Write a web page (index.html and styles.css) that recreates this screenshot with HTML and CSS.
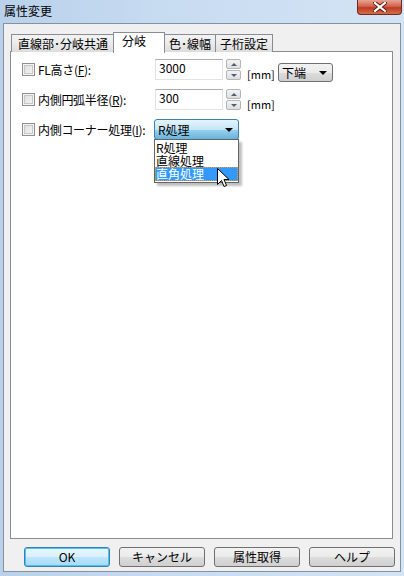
FILE: index.html
```html
<!DOCTYPE html>
<html lang="ja">
<head>
    <meta charset="UTF-8">
    <title>属性変更</title>
    <link rel="stylesheet" href="styles.css">
</head>
<body>
    <div class="window">
        <div class="titlebar">
            <span class="title">属性変更</span>
            <div class="close">
                <svg width="14" height="10" viewBox="0 0 14 10">
                    <path d="M2 1 L12 9 M12 1 L2 9" stroke="#5a1a12" stroke-width="4" stroke-linecap="square"/>
                    <path d="M2 1 L12 9 M12 1 L2 9" stroke="#ffffff" stroke-width="2.2" stroke-linecap="square"/>
                </svg>
            </div>
        </div>

        <div class="client">
            <div class="tabs">
                <div class="tab">直線部･分岐共通</div>
                <div class="tab active">分岐</div>
                <div class="tab">色･線幅</div>
                <div class="tab">子桁設定</div>
            </div>

            <div class="panel">
                <div class="row">
                    <span class="check"></span>
                    <span class="label">FL高さ(<u>F</u>):</span>
                    <span class="input">3000</span>
                    <span class="spin"><span class="up"></span><span class="down"></span></span>
                    <span class="unit">[mm]</span>
                    <span class="select">下端 <i class="arrow"></i></span>
                </div>
                <div class="row">
                    <span class="check"></span>
                    <span class="label">内側円弧半径(<u>R</u>):</span>
                    <span class="input">300</span>
                    <span class="spin"><span class="up"></span><span class="down"></span></span>
                    <span class="unit">[mm]</span>
                </div>
                <div class="row">
                    <span class="check"></span>
                    <span class="label">内側コーナー処理(<u>I</u>):</span>
                    <div class="combo-wrap">
                        <span class="combo">R処理 <i class="arrow"></i></span>
                        <ul class="droplist">
                            <li>R処理</li>
                            <li>直線処理</li>
                            <li class="hot">直角処理</li>
                        </ul>
                        <svg class="cursor" width="13" height="21" viewBox="0 0 13 21">
                            <path d="M0.5 0.5 L0.5 16.5 L4.5 12.5 L7 18.5 L9.5 17.5 L7 11.5 L12 11.5 Z" fill="#ffffff" stroke="#000000" stroke-width="1"/>
                        </svg>
                    </div>
                </div>
            </div>

            <div class="buttons">
                <button class="default">OK</button>
                <button>キャンセル</button>
                <button>属性取得</button>
                <button>ヘルプ</button>
            </div>
        </div>
    </div>
</body>
</html>
```

FILE: styles.css
```css
body {
    margin: 0;
    font-family: "Noto Sans CJK JP", "Liberation Sans", sans-serif;
    font-size: 12px;
    color: #000;
}
.window {
    width: 404px;
    height: 576px;
    background: linear-gradient(to right, #b9d1ea, #c7dbf1 40%, #d4e4f4);
    display: flex;
    flex-direction: column;
}
.titlebar {
    height: 23px;
    display: flex;
    align-items: center;
    padding-left: 4px;
    position: relative;
}
.title {
    margin-top: -3px;
}
.close {
    position: absolute;
    top: 0;
    right: 2px;
    width: 45px;
    height: 15px;
    border: 1px solid #6e2a22;
    border-top: none;
    border-radius: 0 0 4px 4px;
    background: linear-gradient(#e8a493, #d0634e 45%, #c1391f 55%, #d2704d);
    display: flex;
    align-items: center;
    justify-content: center;
    box-sizing: border-box;
}
.client {
    flex: 1;
    margin: 0 3px 4px 3px;
    border: 1px solid #86919f;
    background: #f0f0f0;
    padding: 7px 0 0 6px;
    display: flex;
    flex-direction: column;
}
.tabs {
    display: flex;
    align-items: flex-end;
    height: 20px;
    margin-left: 1px;
    position: relative;
    z-index: 1;
}
.tab {
    height: 18px;
    padding: 0 4px;
    border: 1px solid #898c95;
    border-bottom: none;
    background: linear-gradient(#f3f3f3, #ebebeb 50%, #dcdcdc);
    line-height: 18px;
    margin-right: -1px;
    margin-bottom: -1px;
    box-sizing: border-box;
}
.tab:first-child {
    padding: 0 5px 0 6px;
}
.tab.active {
    height: 21px;
    background: #fff;
    padding: 0 18px 0 8px;
    line-height: 16px;
    margin-bottom: -2px;
    position: relative;
}
.panel {
    width: 383px;
    height: 488px;
    box-sizing: border-box;
    border: 1px solid #898c95;
    background: #fff;
    padding: 7px 0 0 11px;
    display: flex;
    flex-direction: column;
    gap: 9px;
}
.row {
    display: flex;
    align-items: center;
    height: 21px;
}
.check {
    width: 13px;
    height: 13px;
    box-sizing: border-box;
    border: 1px solid #8e8f8f;
    background: linear-gradient(135deg, #dcdcdc, #f6f6f6);
    box-shadow: inset 0 0 0 1px #f4f4f4, inset 0 0 0 2px #c7c7c7;
}
.label {
    margin-left: 3px;
    width: 117px;
    letter-spacing: -0.3px;
}
.input {
    width: 68px;
    height: 21px;
    box-sizing: border-box;
    border: 1px solid #e2e3ea;
    border-top-color: #abadb3;
    padding: 1px 0 0 3px;
    line-height: 14px;
    background: #fff;
}
.spin {
    width: 15px;
    height: 21px;
    margin-left: 3px;
    display: flex;
    flex-direction: column;
    gap: 1px;
}
.spin span {
    flex: 1;
    border: 1px solid #b5b5b5;
    border-radius: 2px;
    background: linear-gradient(#f4f4f4, #dedede);
    display: flex;
    align-items: center;
    justify-content: center;
}
.spin .up::after {
    content: "";
    border: 3px solid transparent;
    border-bottom: 3px solid #4c607a;
    border-top: none;
}
.spin .down::after {
    content: "";
    border: 3px solid transparent;
    border-top: 3px solid #4c607a;
    border-bottom: none;
}
.unit {
    margin-left: 6px;
    margin-top: 8px;
    font-size: 11px;
    width: 31px;
}
.select {
    width: 55px;
    height: 19px;
    box-sizing: border-box;
    margin-top: 6px;
    border: 1px solid #707070;
    border-radius: 3px;
    background: linear-gradient(#f2f2f2, #ebebeb 50%, #dddddd 51%, #cfcfcf);
    padding-left: 3px;
    display: flex;
    align-items: center;
    justify-content: space-between;
    line-height: 17px;
}
.arrow {
    width: 0;
    height: 0;
    border: 4px solid transparent;
    border-top: 4px solid #000;
    border-bottom: none;
    margin-right: 5px;
}
.combo-wrap {
    position: relative;
    margin-left: -1px;
}
.combo {
    width: 85px;
    height: 21px;
    box-sizing: border-box;
    border: 1px solid #3c7fb1;
    border-radius: 3px;
    background: linear-gradient(#e5f4fc, #c4e5f6 50%, #98d1ef 51%, #68b3db);
    padding-left: 3px;
    display: flex;
    align-items: center;
    justify-content: space-between;
}
.droplist {
    position: absolute;
    left: 0;
    top: 20px;
    width: 85px;
    margin: 0;
    padding: 1px 0 0 0;
    list-style: none;
    background: #fff;
    border: 1px solid #646464;
    box-sizing: border-box;
    box-shadow: 3px 3px 2px rgba(0, 0, 0, 0.25);
}
.droplist li {
    height: 13px;
    line-height: 13px;
    padding-left: 1px;
}
.droplist li.hot {
    background: #3399ff;
    color: #fff;
    outline: 1px dotted #e89a2a;
    outline-offset: -1px;
    height: 14px;
    line-height: 14px;
    margin-bottom: 1px;
}
.cursor {
    position: absolute;
    left: 63px;
    top: 49px;
}
.buttons {
    display: flex;
    gap: 9px;
    margin: 8px 0 0 14px;
}
button {
    width: 86px;
    height: 20px;
    font-family: inherit;
    font-size: 12px;
    border: 1px solid #707070;
    border-radius: 3px;
    background: linear-gradient(#f2f2f2, #ebebeb 50%, #dddddd 51%, #cfcfcf);
    padding: 0;
    line-height: 16px;
}
button.default {
    border-color: #3c7fb1;
    background: linear-gradient(#eaf6fd, #d9f0fc 50%, #bee6fd 51%, #a7d9f5);
    box-shadow: inset 0 0 0 1px #48c4f5;
}
```
